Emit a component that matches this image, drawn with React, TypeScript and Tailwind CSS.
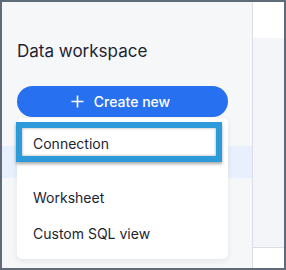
import React from "react";

export default function App() {
  return (
    <div
      className="w-[286px] h-[270px] border-2 border-[#5f6b79] flex overflow-hidden"
      style={{ fontFamily: "Inter, 'Liberation Sans', sans-serif" }}
    >
      <div className="relative w-[251px] h-full bg-[#f6f7f9] border-r border-[#dcdde6] shrink-0">
        <div className="pl-[15px] pt-[37px] text-[17px] leading-[24px] text-[#1d2433]">
          Data workspace
        </div>
        <div className="mt-[23px] ml-[15px] w-[211px] h-[31px] rounded-full bg-[#2770ef] flex items-center justify-center gap-[10px] text-white text-[14px] font-medium">
          <svg width="13" height="13" viewBox="0 0 13 13" className="-ml-[4px]">
            <path d="M6.5 0.5v12M0.5 6.5h12" stroke="white" strokeWidth="1.6" />
          </svg>
          <span>Create new</span>
        </div>
        <div className="absolute left-0 right-0 top-[144px] h-[32px] bg-[#e8f0fd]" />
        <div className="absolute left-[15px] top-[116px] w-[211px] h-[141px] bg-white rounded-[5px] shadow-[0_2px_6px_rgba(0,0,0,0.08)]">
          <div className="absolute left-[-1px] top-[4px] w-[206px] h-[40px] border-[6px] border-[#2d9bda] bg-white shadow-[inset_0_0_3px_rgba(0,0,0,0.35),0_2px_3px_rgba(0,0,0,0.35)] flex items-center pl-[11px] pt-[3px] text-[14px] text-[#1d2433]">
            Connection
          </div>
          <div className="absolute left-0 right-0 top-[61px] h-[36px] flex items-center pl-[16px] text-[14px] text-[#1d2433]">
            Worksheet
          </div>
          <div className="absolute left-0 right-0 top-[97px] h-[36px] flex items-center pl-[16px] text-[14px] text-[#1d2433]">
            Custom SQL view
          </div>
        </div>
      </div>
      <div className="flex-1 flex flex-col">
        <div className="h-[36px] bg-white" />
        <div className="flex-1 bg-[#f4f5f8] border-b border-[#dcdde6]" />
        <div className="h-[20px] bg-white" />
      </div>
    </div>
  );
}
